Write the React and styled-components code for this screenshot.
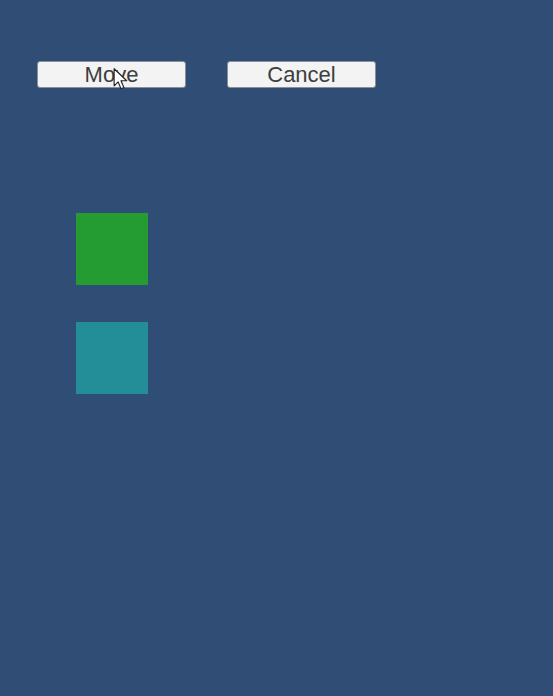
import React from "react"
import styled, { createGlobalStyle } from "styled-components"

const GlobalStyle = createGlobalStyle`
  html, body {
    margin: 0;
    padding: 0;
    background: #2f4d75;
  }
`

const Page = styled.div`
  position: relative;
  width: 553px;
  height: 696px;
  background: #2f4d75;
  font-family: "Liberation Sans", Arial, sans-serif;
  overflow: hidden;
`

const Toolbar = styled.div`
  display: flex;
  gap: 41px;
  padding: 61px 0 0 37px;
`

const Button = styled.button`
  box-sizing: border-box;
  width: 149px;
  height: 27px;
  padding: 0;
  background: #f3f3f3;
  border: 1px solid #8a8f96;
  border-radius: 3px;
  color: #3d3d3d;
  font-family: "Liberation Sans", Arial, sans-serif;
  font-size: 22px;
  line-height: 25px;
  cursor: pointer;
`

const Stack = styled.div`
  display: flex;
  flex-direction: column;
  gap: 37px;
  padding: 125px 0 0 76px;
`

const Square = styled.div`
  width: 72px;
  height: 72px;
  background: ${(p) => p.color};
`

const Cursor = styled.svg`
  position: absolute;
  left: 113px;
  top: 67px;
`

export default function App() {
  return (
    <Page>
      <GlobalStyle />
      <Toolbar>
        <Button>Move</Button>
        <Button>Cancel</Button>
      </Toolbar>
      <Stack>
        <Square color="#259c32" />
        <Square color="#238e98" />
      </Stack>
      <Cursor width="16" height="24" viewBox="0 0 14 20">
        <path
          d="M1 1 L1 16 L4.5 12.5 L7 18.5 L9.5 17.5 L7 11.5 L12 11.5 Z"
          fill="#fff"
          stroke="#222"
          strokeWidth="1"
          strokeLinejoin="round"
        />
      </Cursor>
    </Page>
  )
}
